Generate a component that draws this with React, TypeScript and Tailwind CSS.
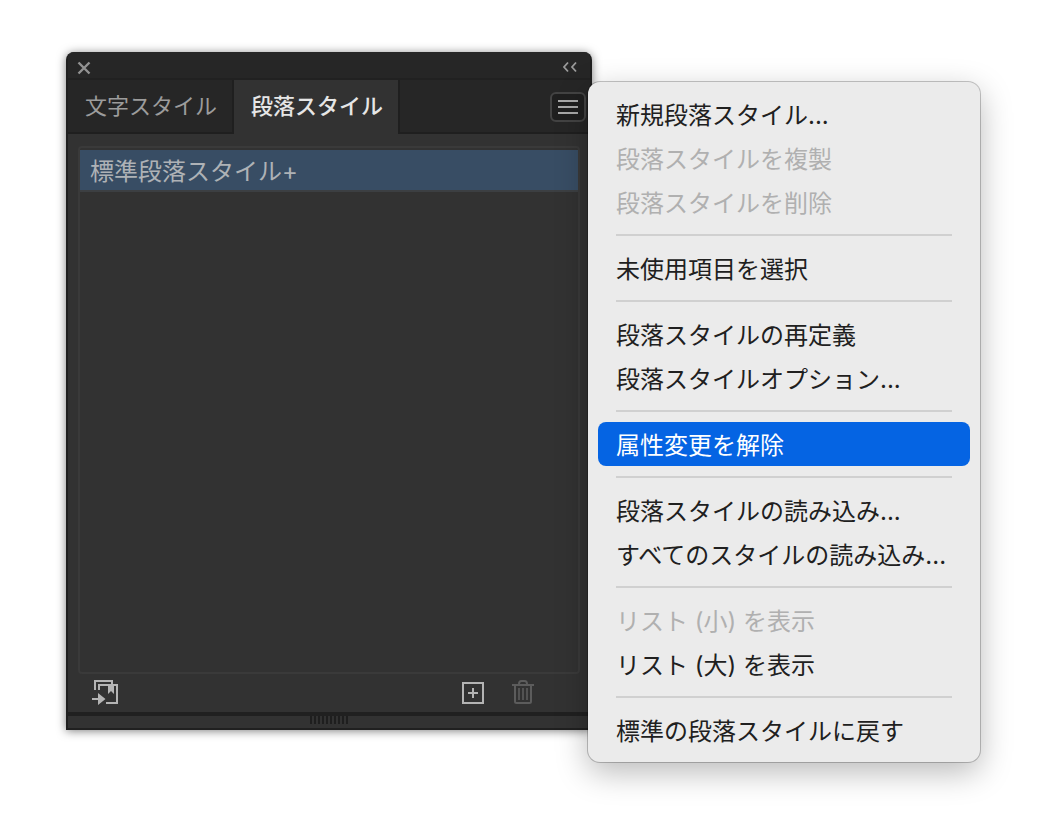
import { useState } from "react";

type MenuItem = { label: string; disabled?: boolean };

const TABS = ["文字スタイル", "段落スタイル"];

const MENU_GROUPS: MenuItem[][] = [
  [
    { label: "新規段落スタイル..." },
    { label: "段落スタイルを複製", disabled: true },
    { label: "段落スタイルを削除", disabled: true },
  ],
  [{ label: "未使用項目を選択" }],
  [{ label: "段落スタイルの再定義" }, { label: "段落スタイルオプション..." }],
  [{ label: "属性変更を解除" }],
  [{ label: "段落スタイルの読み込み..." }, { label: "すべてのスタイルの読み込み..." }],
  [{ label: "リスト (小) を表示", disabled: true }, { label: "リスト (大) を表示" }],
  [{ label: "標準の段落スタイルに戻す" }],
];

function CloseIcon() {
  return (
    <svg width="14" height="14" viewBox="0 0 14 14" fill="none" stroke="#929292" strokeWidth="2.4">
      <path d="M1.5 1.5l11 11M12.5 1.5l-11 11" />
    </svg>
  );
}

function CollapseIcon() {
  return (
    <svg width="16" height="12" viewBox="0 0 16 12" fill="none" stroke="#9a9a9a" strokeWidth="1.8">
      <path d="M6 1.5L2 6l4 4.5M14 1.5L10 6l4 4.5" />
    </svg>
  );
}

function LoadIcon() {
  return (
    <svg width="26" height="25" viewBox="0 0 26 25" fill="none">
      <path d="M3 10V1h17v3" stroke="#b4b4b4" strokeWidth="2" />
      <path d="M7 10V5h18v18H14" stroke="#b4b4b4" strokeWidth="2" />
      <path d="M16 4h6v10l-3-3-3 3z" fill="#b4b4b4" />
      <path d="M0 18h6v-5l7.5 6L6 25v-5H0z" fill="#b4b4b4" />
    </svg>
  );
}

function AddIcon() {
  return (
    <svg width="22" height="22" viewBox="0 0 22 22" fill="none" stroke="#b4b4b4" strokeWidth="2">
      <path d="M1 1h20v20H1zM11 6v10M6 11h10" />
    </svg>
  );
}

function TrashIcon() {
  return (
    <svg width="22" height="24" viewBox="0 0 22 24" fill="none" stroke="#5c5c5c" strokeWidth="2">
      <path d="M0 5h22" />
      <path d="M7 4c0-2 1-3 2.5-3h3c1.500 0 2.500 1 2.500 3" />
      <path d="M3 5v16.5q0 1.500 1.500 1.500h13q1.500 0 1.500-1.500V5" />
      <path d="M7 8v12M11 8v12M15 8v12" strokeWidth="1.6" />
    </svg>
  );
}

function StylesPanel() {
  const [tab, setTab] = useState(1);

  return (
    <section className="mb-8 flex min-w-0 flex-1 flex-col overflow-hidden rounded-t-lg border-x-2 border-b-2 border-[#202020] bg-[#323232] shadow-[0_1px_10px_rgba(0,0,0,0.5)]">
      <div className="flex h-7 items-center justify-between border-b-2 border-[#212121] bg-[#262626] pt-1.5 pr-3 pl-2">
        <button type="button" aria-label="閉じる" className="p-px">
          <CloseIcon />
        </button>
        <button type="button" aria-label="折りたたむ" className="pb-0.5">
          <CollapseIcon />
        </button>
      </div>

      <div className="flex h-[54px] bg-[#262626]">
        <div role="tablist" className="flex">
          {TABS.map((name, i) => (
            <button
              key={name}
              type="button"
              role="tab"
              aria-selected={i === tab}
              onClick={() => setTab(i)}
              className={
                i === tab
                  ? "w-[166px] border-r-2 border-[#1f1f1f] bg-[#323232] pb-0.5 pl-0.5 text-[22px] font-medium text-[#e6e6e6]"
                  : "w-[166px] border-r-2 border-b-2 border-[#1f1f1f] pl-0.5 text-[22px] text-[#9c9c9c]"
              }
            >
              {name}
            </button>
          ))}
        </div>
        <div className="flex flex-1 items-center justify-end border-b-2 border-[#1f1f1f] pt-0.5 pr-1">
          <button
            type="button"
            aria-label="パネルメニュー"
            aria-haspopup="menu"
            className="flex h-[30px] w-9 flex-col items-center justify-center gap-1 rounded-md border-2 border-[#434343] bg-[#1f1f1f]"
          >
            <span className="h-0.5 w-5 bg-[#a8a8a8]" />
            <span className="h-0.5 w-5 bg-[#a8a8a8]" />
            <span className="h-0.5 w-5 bg-[#a8a8a8]" />
          </button>
        </div>
      </div>

      <ul role="listbox" aria-label="段落スタイル" className="mx-2.5 mt-3 flex-1 rounded-sm border-2 border-[#3a3a3a] pt-0.5">
        <li
          role="option"
          aria-selected="true"
          className="flex h-[42px] items-center border-b-2 border-[#3c3f42] bg-[#384d64] pt-[3px] pl-2.5 text-2xl text-[#aeb2b6]"
        >
          標準段落スタイル+
        </li>
      </ul>

      <div className="flex h-[38px] items-center pr-14 pl-6">
        <button type="button" aria-label="スタイルを読み込み" className="pb-0.5">
          <LoadIcon />
        </button>
        <button type="button" aria-label="新規スタイルを作成" className="mr-7 ml-auto">
          <AddIcon />
        </button>
        <button type="button" aria-label="スタイルを削除" disabled className="pb-0.5">
          <TrashIcon />
        </button>
      </div>

      <div className="flex h-4 justify-center gap-0.5 border-t-4 border-[#202020]">
        {Array.from({ length: 10 }, (_, i) => (
          <span key={i} className="h-2 w-0.5 bg-[#1e1e1e]" />
        ))}
      </div>
    </section>
  );
}

function PanelMenu() {
  const [active, setActive] = useState("属性変更を解除");

  return (
    <div
      role="menu"
      className="relative mt-[30px] -ml-1 w-[392px] shrink-0 rounded-xl bg-[#ebebeb] p-2.5 shadow-[0_0_0_1px_rgba(0,0,0,0.22),0_10px_32px_rgba(0,0,0,0.28)]"
    >
      {MENU_GROUPS.map((group, i) => (
        <div key={i} role="group">
          {i > 0 && <hr className="mx-[18px] my-2.5 border-t-2 border-[#d0d0d0]" />}
          {group.map((item) => (
            <button
              key={item.label}
              type="button"
              role="menuitem"
              disabled={item.disabled}
              onMouseEnter={() => setActive(item.label)}
              className={
                item.label === active
                  ? "block h-11 w-full rounded-lg bg-[#0564e3] px-[18px] pt-[3px] text-left text-2xl whitespace-nowrap text-white"
                  : "block h-11 w-full rounded-lg px-[18px] pt-[3px] text-left text-2xl whitespace-nowrap text-[#202020] disabled:text-[#b0b0b0]"
              }
            >
              {item.label}
            </button>
          ))}
        </div>
      ))}
    </div>
  );
}

export default function App() {
  return (
    <main
      lang="ja"
      className="flex min-h-screen items-start bg-white pt-[52px] pr-[60px] pb-[72px] pl-[66px] font-['Inter','Noto_Sans_CJK_JP',sans-serif]"
    >
      <div className="flex min-w-0 flex-1">
        <StylesPanel />
        <PanelMenu />
      </div>
    </main>
  );
}
